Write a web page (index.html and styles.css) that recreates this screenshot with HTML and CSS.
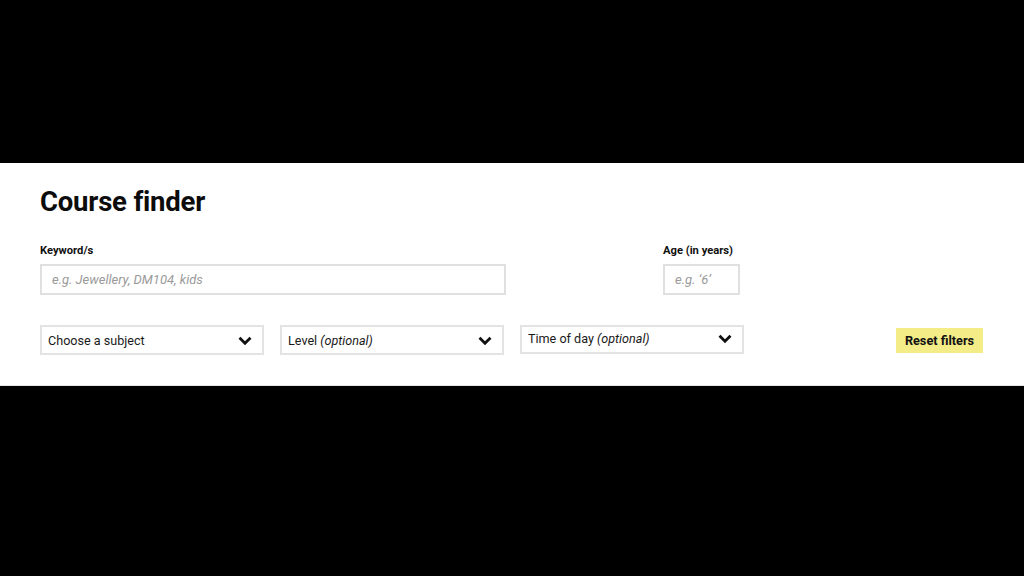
FILE: index.html
```html
<!DOCTYPE html>
<html lang="en">
<head>
<meta charset="utf-8">
<title>Course finder</title>
<link rel="stylesheet" href="styles.css">
</head>
<body>
<div class="stage">
  <section class="panel">
    <h1 class="title">Course finder</h1>
    <div class="row row-fields">
      <div class="field field-keyword">
        <label class="label" for="kw">Keyword/s</label>
        <input class="input" id="kw" type="text" placeholder="e.g. Jewellery, DM104, kids">
      </div>
      <div class="field field-age">
        <label class="label" for="age">Age (in years)</label>
        <input class="input" id="age" type="text" placeholder="e.g. ‘6’">
      </div>
    </div>
    <div class="row row-selects">
      <div class="select">
        <span class="select-text">Choose a subject</span>
        <svg class="chev" viewBox="0 0 14 10" width="14" height="10"><path d="M1.5 1.8 L7 7.3 L12.5 1.8" fill="none" stroke="#111" stroke-width="2.8" stroke-linecap="butt" stroke-linejoin="miter"/></svg>
      </div>
      <div class="select">
        <span class="select-text">Level <em>(optional)</em></span>
        <svg class="chev" viewBox="0 0 14 10" width="14" height="10"><path d="M1.5 1.8 L7 7.3 L12.5 1.8" fill="none" stroke="#111" stroke-width="2.8" stroke-linecap="butt" stroke-linejoin="miter"/></svg>
      </div>
      <div class="select select-up">
        <span class="select-text">Time of day <em>(optional)</em></span>
        <svg class="chev" viewBox="0 0 14 10" width="14" height="10"><path d="M1.5 1.8 L7 7.3 L12.5 1.8" fill="none" stroke="#111" stroke-width="2.8" stroke-linecap="butt" stroke-linejoin="miter"/></svg>
      </div>
      <button class="reset" type="button">Reset filters</button>
    </div>
  </section>
</div>
</body>
</html>
```

FILE: styles.css
```css
html, body {
  margin: 0;
  padding: 0;
  background: #000;
  font-family: Roboto, "Liberation Sans", Arial, sans-serif;
  color: #111;
}

.stage {
  padding-top: 163px;
}

.panel {
  background: #fff;
  height: 223px;
  box-sizing: border-box;
  padding: 23px 41px 0 40px;
  border-bottom: 1px solid #e6e6e6;
}

.title {
  margin: 0;
  font-size: 27.5px;
  font-weight: 700;
  line-height: 32px;
  letter-spacing: -0.2px;
  color: #0c0c0c;
}

.row {
  display: flex;
}

.row-fields {
  margin-top: 26px;
  gap: 157px;
}

.field {
  display: flex;
  flex-direction: column;
}

.field-keyword { width: 466px; }
.field-age { width: 77px; }

.label {
  font-size: 11.2px;
  font-weight: 700;
  line-height: 14px;
  color: #111;
  margin-bottom: 6px;
}

.input {
  box-sizing: border-box;
  height: 31px;
  width: 100%;
  border: 2px solid #e0e0e0;
  padding: 0 10px;
  font-family: inherit;
  font-size: 13px;
  background: #fff;
  outline: none;
}

.input::placeholder {
  color: #9a9a9a;
  font-style: italic;
}

.row-selects {
  margin-top: 30px;
  align-items: center;
  gap: 16px;
}

.select {
  box-sizing: border-box;
  width: 224px;
  height: 30px;
  border: 2px solid #e3e3e3;
  display: flex;
  align-items: center;
  justify-content: space-between;
  padding: 0 10px 0 6px;
  font-size: 12.6px;
  color: #1a1a1a;
}

.select-up {
  margin-top: -1px;
  height: 29px;
  padding-bottom: 2px;
}

.select-text em {
  font-style: italic;
}

.chev {
  display: block;
  margin-top: 1px;
}

.reset {
  margin-left: auto;
  width: 87px;
  height: 25px;
  border: 0;
  background: #f4ec86;
  font-family: inherit;
  font-size: 12.7px;
  font-weight: 700;
  color: #111;
  padding: 0;
  margin-top: 1px;
  cursor: pointer;
}
```
